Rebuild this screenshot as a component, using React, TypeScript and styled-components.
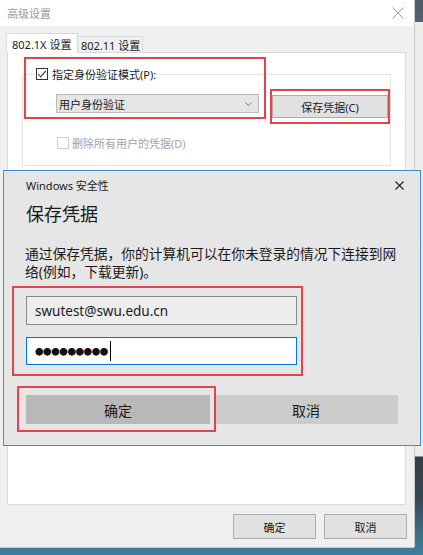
import React from "react";
import styled, { createGlobalStyle } from "styled-components";

const Global = createGlobalStyle`
  html, body { margin: 0; padding: 0; }
  body {
    font-family: "Noto Sans", "Noto Sans CJK SC", sans-serif;
    color: #1a1a1a;
    overflow: hidden;
  }
  * { box-sizing: border-box; }
`;

const Desktop = styled.div`
  position: relative;
  width: 423px;
  height: 555px;
  overflow: hidden;
  background: linear-gradient(
    to bottom,
    #4c5a69 0px,
    #55636f 22px,
    #eeeeee 22px,
    #ececec 456px,
    #3a3d40 457px,
    #34495a 500px,
    #3b7590 540px,
    #3f7f9a 555px
  );
`;

const OuterWindow = styled.div`
  width: 414px;
  height: 547px;
  background: #f0f0f0;
  box-shadow: 1px 0 0 #c9c9c9, 0 1px 0 #c9c9c9;
  display: flex;
  flex-direction: column;
`;

const TitleBar = styled.div`
  height: 26px;
  background: #ffffff;
  display: flex;
  align-items: center;
  justify-content: space-between;
  padding: 0 10px 0 7px;
  font-size: 11px;
  color: #9a9a9a;
`;

const Body = styled.div`
  padding: 7px 0 0 6px;
  display: flex;
  flex-direction: column;
`;

const TabRow = styled.div`
  display: flex;
  align-items: flex-end;
  height: 20px;
  margin-bottom: -1px;
  position: relative;
  z-index: 1;
`;

const Tab = styled.div<{ $active?: boolean }>`
  height: ${(p) => (p.$active ? 20 : 17)}px;
  width: ${(p) => (p.$active ? 72 : 65)}px;
  background: ${(p) => (p.$active ? "#ffffff" : "#f0f0f0")};
  border: 1px solid #d9d9d9;
  border-bottom: ${(p) => (p.$active ? "none" : "1px solid #d9d9d9")};
  border-left: ${(p) => (p.$active ? "1px solid #d9d9d9" : "none")};
  font-size: 11px;
  color: #1a1a1a;
  display: flex;
  align-items: center;
  padding-left: ${(p) => (p.$active ? 5 : 3)}px;
  white-space: nowrap;
`;

const Panel = styled.div`
  margin-left: 1px;
  width: 399px;
  height: 453px;
  background: #ffffff;
  border: 1px solid #d9d9d9;
  padding: 21px 0 0 14px;
`;

const Group = styled.div`
  position: relative;
  width: 369px;
  height: 92px;
  border: 1px solid #e3e3e3;
  padding: 19px 0 0 33px;
  display: flex;
  flex-direction: column;
`;

const Legend = styled.div`
  position: absolute;
  top: -9px;
  left: 11px;
  padding: 0 3px 0 2px;
  background: #ffffff;
  display: flex;
  align-items: center;
  gap: 4px;
  height: 16px;
  font-size: 11px;
`;

const CheckBox = styled.span<{ $disabled?: boolean }>`
  width: 12px;
  height: 12px;
  border: 1px solid ${(p) => (p.$disabled ? "#cccccc" : "#333333")};
  background: #ffffff;
  display: inline-flex;
  align-items: center;
  justify-content: center;
`;

const Row = styled.div`
  display: flex;
  align-items: flex-start;
`;

const Select = styled.div`
  width: 203px;
  height: 19px;
  background: #e5e5e5;
  border: 1px solid #b9b9b9;
  display: flex;
  align-items: center;
  justify-content: space-between;
  padding: 0 6px 0 2px;
  font-size: 11px;
`;

const WinButton = styled.div<{ $w: number; $h: number }>`
  width: ${(p) => p.$w}px;
  height: ${(p) => p.$h}px;
  background: #e1e1e1;
  border: 1px solid #adadad;
  display: flex;
  align-items: center;
  justify-content: center;
  font-size: 11px;
  color: #1a1a1a;
`;

const SaveButton = styled(WinButton)`
  margin: 1px 0 0 13px;
`;

const DisabledRow = styled.div`
  margin: 17px 0 0 1px;
  display: flex;
  align-items: center;
  gap: 3px;
  font-size: 11px;
  color: #a3a3a3;
`;

const Footer = styled.div`
  display: flex;
  justify-content: flex-end;
  gap: 8px;
  padding: 9px 7px 0 0;
`;

const SecurityDialog = styled.div`
  position: absolute;
  left: 3px;
  top: 170px;
  width: 418px;
  height: 276px;
  background: #e6e6e6;
  border: 1px solid #3d8fd8;
  padding: 0 22px 0 22px;
  display: flex;
  flex-direction: column;
  z-index: 2;
`;

const SecHeader = styled.div`
  height: 28px;
  display: flex;
  align-items: center;
  justify-content: space-between;
  font-size: 11px;
  color: #1a1a1a;
  margin-right: -6px;
`;

const Heading = styled.div`
  margin-top: 2px;
  height: 26px;
  line-height: 26px;
  font-size: 18px;
  color: #1a1a1a;
`;

const Para = styled.div`
  margin-top: 18px;
  width: 374px;
  margin-left: -1px;
  font-size: 13.75px;
  line-height: 18px;
  color: #1a1a1a;
`;

const Input = styled.div<{ $focused?: boolean }>`
  width: 271px;
  height: ${(p) => (p.$focused ? 28 : 29)}px;
  background: ${(p) => (p.$focused ? "#ffffff" : "#ededed")};
  border: 1px solid ${(p) => (p.$focused ? "#0078d7" : "#8a8a8a")};
  display: flex;
  align-items: center;
  padding-left: 8px;
  font-size: 13.5px;
  color: #1a1a1a;
`;

const UserInput = styled(Input)`
  margin-top: 15px;
`;

const PassInput = styled(Input)`
  margin-top: 12px;
`;

const Dots = styled.span`
  font-size: 8.5px;
  letter-spacing: -0.4px;
  color: #111;
`;

const Caret = styled.span`
  width: 1px;
  height: 20px;
  background: #000;
  margin-left: 2px;
`;

const ButtonRow = styled.div`
  margin-top: 30px;
  display: flex;
  gap: 4px;
`;

const FlatButton = styled.div<{ $primary?: boolean }>`
  width: 184px;
  height: 29px;
  background: ${(p) => (p.$primary ? "#b8b8b8" : "#cccccc")};
  display: flex;
  align-items: center;
  justify-content: center;
  font-size: 14px;
  color: #1a1a1a;
`;

const Annotation = styled.div<{ $x: number; $y: number; $w: number; $h: number }>`
  position: absolute;
  left: ${(p) => p.$x}px;
  top: ${(p) => p.$y}px;
  width: ${(p) => p.$w}px;
  height: ${(p) => p.$h}px;
  border: 2px solid #e5434a;
  z-index: 3;
  pointer-events: none;
`;

const CloseIcon = ({ color, size, stroke }: { color: string; size: number; stroke: number }) => (
  <svg width={size} height={size} viewBox={`0 0 ${size} ${size}`}>
    <path d={`M0.5 0.5 L${size - 0.5} ${size - 0.5} M${size - 0.5} 0.5 L0.5 ${size - 0.5}`} stroke={color} strokeWidth={stroke} fill="none" />
  </svg>
);

const Check = () => (
  <svg width="10" height="10" viewBox="0 0 10 10">
    <polyline points="1.2,5.2 3.8,7.8 8.8,1.8" fill="none" stroke="#333" strokeWidth="1.1" />
  </svg>
);

const Chevron = () => (
  <svg width="7" height="4" viewBox="0 0 7 4">
    <polyline points="0.5,0.5 3.5,3.5 6.5,0.5" fill="none" stroke="#6b6b6b" strokeWidth="0.9" />
  </svg>
);

export default function App() {
  return (
    <Desktop>
      <Global />
      <OuterWindow>
        <TitleBar>
          <span>高级设置</span>
          <CloseIcon color="#a0a0a0" size={12} stroke={1} />
        </TitleBar>
        <Body>
          <TabRow>
            <Tab $active>802.1X 设置</Tab>
            <Tab>802.11 设置</Tab>
          </TabRow>
          <Panel>
            <Group>
              <Legend>
                <CheckBox>
                  <Check />
                </CheckBox>
                <span>指定身份验证模式(P):</span>
              </Legend>
              <Row>
                <Select>
                  <span>用户身份验证</span>
                  <Chevron />
                </Select>
                <SaveButton $w={116} $h={23}>保存凭据(C)</SaveButton>
              </Row>
              <DisabledRow>
                <CheckBox $disabled />
                <span>删除所有用户的凭据(D)</span>
              </DisabledRow>
            </Group>
          </Panel>
          <Footer>
            <WinButton $w={83} $h={25}>确定</WinButton>
            <WinButton $w={83} $h={25}>取消</WinButton>
          </Footer>
        </Body>
      </OuterWindow>

      <SecurityDialog>
        <SecHeader>
          <span>Windows 安全性</span>
          <CloseIcon color="#222222" size={9} stroke={1.1} />
        </SecHeader>
        <Heading>保存凭据</Heading>
        <Para>通过保存凭据，你的计算机可以在你未登录的情况下连接到网络(例如，下载更新)。</Para>
        <UserInput>swutest@swu.edu.cn</UserInput>
        <PassInput $focused>
          <Dots>●●●●●●●●●</Dots>
          <Caret />
        </PassInput>
        <ButtonRow>
          <FlatButton $primary>确定</FlatButton>
          <FlatButton>取消</FlatButton>
        </ButtonRow>
      </SecurityDialog>

      <Annotation $x={24} $y={57} $w={242} $h={62} />
      <Annotation $x={270} $y={89} $w={120} $h={35} />
      <Annotation $x={12} $y={286} $w={291} $h={90} />
      <Annotation $x={17} $y={386} $w={199} $h={46} />
    </Desktop>
  );
}
